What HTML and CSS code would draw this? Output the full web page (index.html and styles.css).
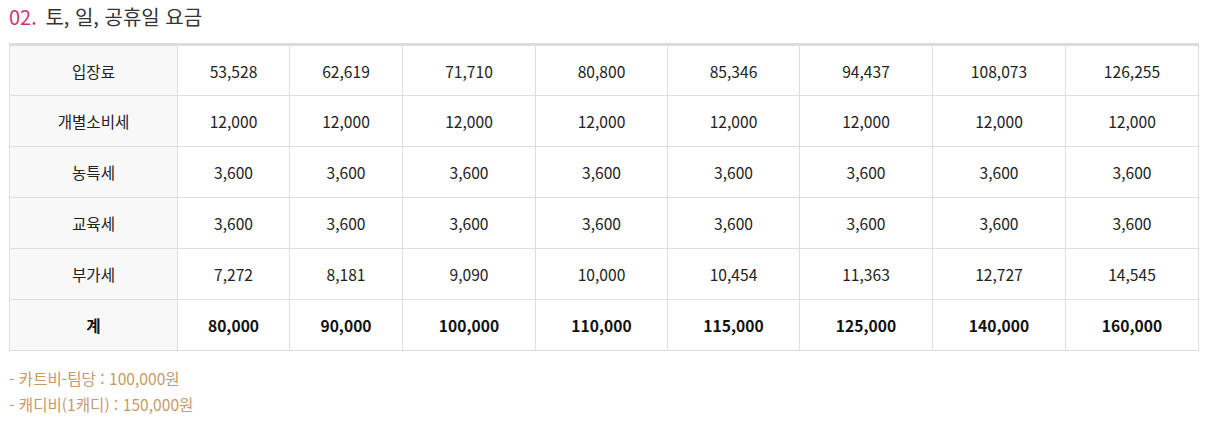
FILE: index.html
```html
<!DOCTYPE html>
<html lang="ko">
<head>
<meta charset="utf-8">
<link rel="stylesheet" href="styles.css">
</head>
<body>
<div class="wrap">
  <h2 class="title"><span class="num">02.</span> 토, 일, 공휴일 요금</h2>
  <table class="fee">
    <colgroup>
      <col class="c-head"><col class="c-s"><col class="c-s2"><col class="c-m"><col class="c-m2"><col class="c-m2"><col class="c-m"><col class="c-m"><col class="c-m">
    </colgroup>
    <tbody>
      <tr><th>입장료</th><td>53,528</td><td>62,619</td><td>71,710</td><td>80,800</td><td>85,346</td><td>94,437</td><td>108,073</td><td>126,255</td></tr>
      <tr><th>개별소비세</th><td>12,000</td><td>12,000</td><td>12,000</td><td>12,000</td><td>12,000</td><td>12,000</td><td>12,000</td><td>12,000</td></tr>
      <tr><th>농특세</th><td>3,600</td><td>3,600</td><td>3,600</td><td>3,600</td><td>3,600</td><td>3,600</td><td>3,600</td><td>3,600</td></tr>
      <tr><th>교육세</th><td>3,600</td><td>3,600</td><td>3,600</td><td>3,600</td><td>3,600</td><td>3,600</td><td>3,600</td><td>3,600</td></tr>
      <tr><th>부가세</th><td>7,272</td><td>8,181</td><td>9,090</td><td>10,000</td><td>10,454</td><td>11,363</td><td>12,727</td><td>14,545</td></tr>
      <tr class="total"><th>계</th><td>80,000</td><td>90,000</td><td>100,000</td><td>110,000</td><td>115,000</td><td>125,000</td><td>140,000</td><td>160,000</td></tr>
    </tbody>
  </table>
  <ul class="notes">
    <li>- 카트비-팀당 : 100,000원</li>
    <li>- 캐디비(1캐디) : 150,000원</li>
  </ul>
</div>
</body>
</html>
```

FILE: styles.css
```css
html, body {
  margin: 0;
  padding: 0;
  background: #fff;
}
body {
  font-family: "Noto Sans CJK KR", "Noto Sans", sans-serif;
  color: #222;
}
.wrap {
  padding: 0 12px 0 9px;
}
.title {
  margin: 0;
  padding-top: 3px;
  height: 43px;
  box-sizing: border-box;
  font-size: 20px;
  font-weight: 400;
  line-height: 28px;
  color: #333;
}
.title .num {
  color: #c8347c;
  margin-right: 3px;
}
.fee {
  width: 1189px;
  border-collapse: collapse;
  table-layout: fixed;
  border-top: 3px solid #dcdcdc;
}
.c-head { width: 168px; }
.c-s { width: 112px; }
.c-s2 { width: 113px; }
.c-m { width: 133px; }
.c-m2 { width: 132px; }
.fee th, .fee td {
  border: 1px solid #dedede;
  height: 51px;
  padding: 0;
  text-align: center;
  font-size: 15.6px;
  font-weight: 400;
  color: #222;
  box-sizing: border-box;
}
.fee th {
  background: #f8f8f8;
}
.fee .total th, .fee .total td {
  font-weight: 700;
  color: #111;
}
.notes {
  list-style: none;
  margin: 14px 0 0;
  padding: 0;
  font-size: 15.6px;
  line-height: 26px;
  color: #c99a68;
}
```
